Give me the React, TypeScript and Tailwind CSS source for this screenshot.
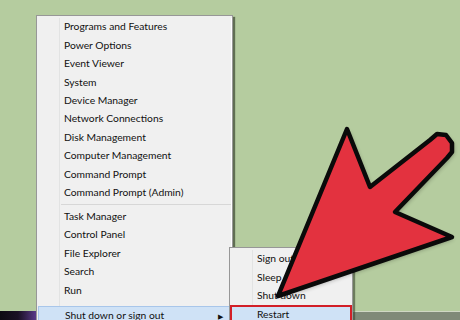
const mainItems: (string | null)[] = [
  'Programs and Features',
  'Power Options',
  'Event Viewer',
  'System',
  'Device Manager',
  'Network Connections',
  'Disk Management',
  'Computer Management',
  'Command Prompt',
  'Command Prompt (Admin)',
  null,
  'Task Manager',
  'Control Panel',
  'File Explorer',
  'Search',
  'Run',
]

const subItems = ['Sign out', 'Sleep', 'Shut down', 'Restart']

function MenuRow({ label }: { label: string }) {
  return (
    <div className="flex h-[18.4px] items-center">
      <span className="w-[23px] shrink-0 self-stretch border-r border-[#e2e3e3]" />
      <span className="pl-[4px]">{label}</span>
    </div>
  )
}

function Arrow() {
  return (
    <svg className="absolute left-0 top-0" width="460" height="320" viewBox="0 0 460 320">
      <defs>
        <filter id="sh" x="-20%" y="-20%" width="140%" height="140%">
          <feGaussianBlur stdDeviation="2" />
        </filter>
      </defs>
      <polygon
        points="278,296 347,129 370,187 430,140 437,134 446,135 452,143 452,152 447,158 395,212 452,237"
        fill="#000"
        opacity="0.3"
        transform="translate(2,2)"
        filter="url(#sh)"
      />
      <polygon
        points="278,296 347,129 370,187 430,140 437,134 446,135 452,143 452,152 447,158 395,212 452,237"
        fill="#e3323f"
        stroke="#0a0a0a"
        strokeWidth="4.5"
        strokeLinejoin="round"
      />
    </svg>
  )
}

export default function App() {
  return (
    <div
      className="relative h-[320px] w-[460px] overflow-hidden bg-[#b5cc9f] text-[10.3px] text-[#111]"
      style={{ fontFamily: 'Lato, "Noto Sans", sans-serif' }}
    >
      {/* taskbar */}
      <div className="absolute bottom-0 left-0 flex h-[9px] w-[460px]">
        <div className="h-full w-[36px] bg-gradient-to-r from-[#0d0a12] via-[#1a1024] to-[#5a3a8a]" />
        <div className="h-full flex-1 border-t border-[#cfd8c4] bg-[#7f8a78]" />
      </div>

      {/* main menu */}
      <div className="absolute left-[36px] top-[15px] w-[197px] border border-[#979797] bg-[#f0f0f0] pt-[2px] shadow-[2px_2px_1px_rgba(60,70,50,0.7)]">
        <div className="border-r border-white">
          {mainItems.map((it, i) =>
            it === null ? (
              <div key={i} className="flex h-[5.6px] items-center">
                <span className="w-[23px] shrink-0 self-stretch border-r border-[#e2e3e3]" />
                <span className="ml-[1px] h-px flex-1 bg-[#d7d7d7]" />
              </div>
            ) : (
              <MenuRow key={i} label={it} />
            )
          )}
          <div className="flex h-[6.6px]">
            <span className="w-[23px] shrink-0 border-r border-[#e2e3e3]" />
          </div>
          <div className="mx-[1px] flex h-[20px] items-center border border-[#a8c6ea] bg-[#cfe2f6]">
            <span className="w-[22px] shrink-0" />
            <span className="flex-1 pl-[4px]">Shut down or sign out</span>
            <span className="pr-[6px] text-[7px]">&#9654;</span>
          </div>
        </div>
      </div>

      {/* submenu */}
      <div className="absolute left-[229px] top-[247px] w-[124px] border border-[#979797] bg-[#f0f0f0] pt-[2px] shadow-[2px_2px_1px_rgba(60,70,50,0.6)]">
        {subItems.slice(0, 3).map((s) => (
          <MenuRow key={s} label={s} />
        ))}
        <div className="flex h-[20px] items-center border-2 border-[#d21f27] bg-[#cfe2f6]">
          <span className="w-[21px] shrink-0" />
          <span className="pl-[4px]">Restart</span>
        </div>
      </div>

      <Arrow />
    </div>
  )
}
